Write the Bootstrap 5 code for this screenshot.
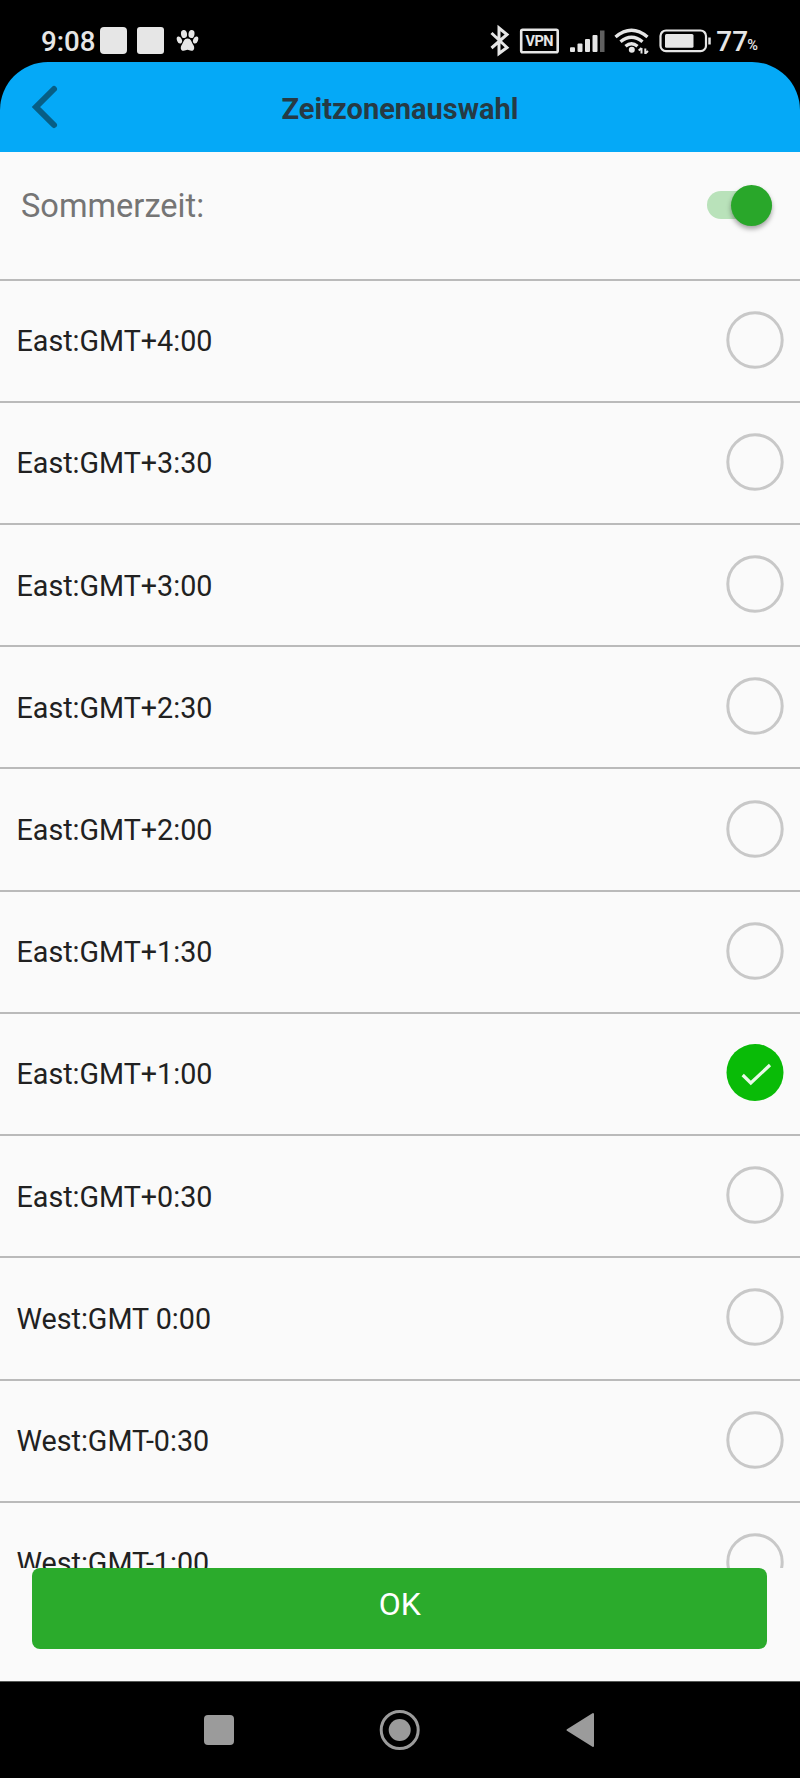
<!DOCTYPE html>
<html lang="de">
<head>
<meta charset="utf-8">
<meta name="viewport" content="width=device-width, initial-scale=1">
<title>Zeitzonenauswahl</title>
<link href="https://cdn.jsdelivr.net/npm/bootstrap@5.3.0/dist/css/bootstrap.min.css" rel="stylesheet">
<style>
  body { font-family: Roboto, "Noto Sans", sans-serif; background: #000; }
  .phone { width: 800px; height: 1778px; }
  .status { height: 62px; padding-top: 20px; color: #e6e6e6; }
  .status svg { display: block; }
  .clock { font-size: 27.7px; font-weight: 500; line-height: 43px; width: 59px; margin-left: 41px; }
  .level { font-size: 28px; font-weight: 500; line-height: 43px; width: 31px; }
  .percent { font-size: 14.5px; font-weight: 500; line-height: 18px; margin-bottom: 8px; }
  .tail { width: 42px; }
  .topbar { height: 90px; background: #05a9f7; border-radius: 48px 48px 0 0; color: #263a44; }
  .topbar h1 { font-size: 29px; line-height: 36px; font-weight: 700; padding-top: 3px; }
  .back { width: 90px; }
  .screen { background: #fafafa; height: 1529px; }
  .dst { height: 126.6px; padding: 0 28px 20px 21px; }
  .dst label { font-size: 32.6px; color: #757575; padding-top: 2px; }
  .toggle { width: 65px; height: 28px; border-radius: 14px; background: #b9e2ba; }
  .knob { width: 41px; height: 41px; background: #29a72a; box-shadow: 0 3px 5px rgba(0,0,0,.35); }
  .zones { height: 1289.4px; }
  .zone { height: 122.23px; border-top: 2px solid #bababa; padding: 0 16px 0 16.5px; font-size: 28.7px; color: #212121; }
  .zone span { padding-top: 2px; }
  .zone svg { margin-bottom: 2px; }
  .ok-btn { --bs-btn-bg: #2bab2c; --bs-btn-color: #fff; --bs-btn-border-width: 0; --bs-btn-border-radius: 8px;
            height: 81px; margin: 0 33px 0 32.4px; padding: 0 0 8px; font-size: 32px; font-weight: 400; }
  .navkeys { height: 97px; border-top: 1px solid #565956; }
</style>
</head>
<body class="overflow-hidden">
<div class="phone d-flex flex-column overflow-hidden">

  <div class="status d-flex align-items-start flex-shrink-0">
    <div class="clock">9:08</div>
    <svg width="100" height="42" fill="#e6e6e6">
      <rect x="0" y="7" width="27" height="27" rx="4"/><rect x="37" y="7" width="27" height="27" rx="3"/>
      <ellipse cx="84" cy="14" rx="3" ry="4.1" transform="rotate(-8 84 14)"/><ellipse cx="91.5" cy="14" rx="3" ry="4.1" transform="rotate(8 91.5 14)"/>
      <ellipse cx="79.4" cy="20" rx="2.4" ry="3.7" transform="rotate(-22 79.4 20)"/><ellipse cx="95.6" cy="20" rx="2.4" ry="3.7" transform="rotate(22 95.6 20)"/>
      <path d="M87.5 18.5C84 18.5 83.5 22 82 24.500C80 27.200 80.500 30.800 83.500 30.800C85.500 30.800 86 29.800 87.500 29.800S89.500 30.800 91.500 30.800C94.500 30.800 95 27.200 93 24.500C91.500 22 91 18.500 87.500 18.500Z"/>
    </svg>
    <div class="d-flex ms-auto">
      <svg width="226" height="42" fill="none" stroke="#e6e6e6">
        <path d="M1.500 13L17 27.500L9 33.500V8L17 14.500L1.500 28" stroke-width="3"/>
        <rect x="31.200" y="9.700" width="36.500" height="22.500" rx="1.500" stroke-width="2.600"/>
        <text x="49.500" y="26" text-anchor="middle" font-size="14.500" font-weight="700" textLength="28" fill="#e6e6e6" stroke="none">VPN</text>
        <g fill="#e6e6e6" stroke="none">
          <rect x="80" y="27.300" width="5" height="4.700" rx="1"/><rect x="87.500" y="23.500" width="5" height="8.500" rx="1"/>
          <rect x="95" y="19" width="5" height="13" rx="1"/><rect x="102.500" y="15" width="5" height="17" rx="1"/>
          <rect x="110" y="10.500" width="4.500" height="21.500" fill="#606060"/>
        </g>
        <g stroke-width="3.400">
          <path d="M125.500 17Q141.500 3.500 157.500 17"/><path d="M130.500 21.700Q141.500 12.700 152.500 21.700"/><path d="M135.500 26.300Q141.500 21.300 147.500 26.300"/>
        </g>
        <circle cx="141.800" cy="29.800" r="3" fill="#e6e6e6" stroke="none"/>
        <path d="M151.500 28V33.500M148.700 30.500L151.500 28M155.300 34V28.500M158 31L155.300 33.500" stroke-width="2"/>
        <rect x="170.500" y="10.500" width="45.500" height="20.700" rx="5.500" stroke-width="2.200"/>
        <rect x="175" y="14" width="28.500" height="13.700" rx="1.500" fill="#e6e6e6" stroke="none"/>
        <path d="M219.500 17.500V24.500" stroke-width="2.500"/>
      </svg>
      <div class="level">77</div>
      <div class="percent align-self-end">%</div>
    </div>
    <div class="tail"></div>
  </div>

  <header class="topbar d-flex align-items-center flex-shrink-0">
    <div class="back">
      <svg class="d-block" width="90" height="90" fill="none" stroke="#075e85" stroke-width="6" stroke-linecap="round" stroke-linejoin="miter"><path d="M54 27L36 45L54 63"/></svg>
    </div>
    <h1 class="m-0 flex-grow-1 text-center">Zeitzonenauswahl</h1>
    <div class="back"></div>
  </header>

  <main class="screen d-flex flex-column flex-shrink-0">
    <div class="dst d-flex align-items-center justify-content-between flex-shrink-0">
      <label>Sommerzeit:</label>
      <div class="toggle d-flex align-items-center justify-content-end"><div class="knob rounded-circle flex-shrink-0"></div></div>
    </div>
    <div class="zones overflow-hidden flex-shrink-0" id="zones"></div>
    <button type="button" class="btn ok-btn flex-shrink-0">OK</button>
  </main>

  <nav class="navkeys flex-shrink-0">
    <svg class="d-block" width="800" height="96" fill="#9b9b9b">
      <rect x="204" y="33" width="30" height="30" rx="4"/>
      <circle cx="399.700" cy="48" r="11"/><circle cx="399.700" cy="48" r="18.500" fill="none" stroke="#9b9b9b" stroke-width="3"/>
      <path d="M567.500 48L593 32V64Z" stroke="#9b9b9b" stroke-width="2" stroke-linejoin="round"/>
    </svg>
  </nav>
</div>

<script>
  const zones = ["East:GMT+4:00", "East:GMT+3:30", "East:GMT+3:00", "East:GMT+2:30", "East:GMT+2:00", "East:GMT+1:30",
                 "East:GMT+1:00", "East:GMT+0:30", "West:GMT 0:00", "West:GMT-0:30", "West:GMT-1:00"];
  const selected = "East:GMT+1:00";
  const empty = '<circle cx="29" cy="29" r="27.200" fill="none" stroke="#c8c8c8" stroke-width="3"/>';
  const checked = '<circle cx="29" cy="28.500" r="28.500" fill="#09bb07"/><path d="M16.700 31L24.800 39L44 21" fill="none" stroke="#e9f9e9" stroke-width="3.200"/>';
  document.getElementById("zones").innerHTML = zones.map(z =>
    `<div class="zone d-flex align-items-center justify-content-between"><span>${z}</span><svg width="58" height="58">${z === selected ? checked : empty}</svg></div>`).join("");
</script>
<script src="https://cdn.jsdelivr.net/npm/bootstrap@5.3.0/dist/js/bootstrap.bundle.min.js"></script>
</body>
</html>
